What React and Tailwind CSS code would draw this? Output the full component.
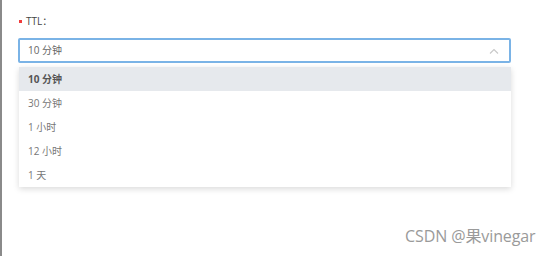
import React from 'react';

const options = ['10 分钟', '30 分钟', '1 小时', '12 小时', '1 天'];

const App = () => {
    const selected = 0;

    return (
        <div
            className="relative w-[554px] h-[256px] bg-white border-l-2 border-[#8a8a8a] overflow-hidden"
            style={{ fontFamily: '"Open Sans", "Noto Sans CJK SC", sans-serif' }}
        >
            <div className="pt-[14px] pl-[16px] w-[509px]">
                {/* label */}
                <div className="flex items-center h-[14px] text-[10px] text-[#444] leading-none">
                    <span className="w-[3px] h-[3px] bg-[#f03c3c] ml-[1px] mr-[4px] mt-[1px]"></span>
                    <span>TTL：</span>
                </div>

                {/* select */}
                <div className="mt-[10px] h-[25px] border-2 border-[#7ab3e6] rounded-[2px] flex items-center justify-between pl-[8px] pr-[9px]">
                    <span className="text-[10px] text-[#666]">10 分钟</span>
                    <svg width="10" height="6" viewBox="0 0 10 6" className="mr-[1px]">
                        <path d="M1 5.5 L5 1.5 L9 5.5" fill="none" stroke="#c8c8c8" strokeWidth="1.1" />
                    </svg>
                </div>

                {/* dropdown */}
                <div className="mt-[4px] ml-[1px] bg-white shadow-[0_2px_6px_rgba(0,0,0,0.15)]">
                    {options.map((opt, i) => (
                        <div
                            key={opt}
                            className={`h-[24px] flex items-center pl-[9px] text-[10px] ${
                                i === selected ? 'bg-[#e6e9ed] text-[#555] font-bold' : 'text-[#777]'
                            }`}
                        >
                            {opt}
                        </div>
                    ))}
                </div>
            </div>

            {/* watermark */}
            <div className="absolute left-[403px] top-[224px] text-[16px] text-[#9a9a9a] tracking-[-0.1px]">
                CSDN @果vinegar
            </div>
        </div>
    );
};

export default App;
